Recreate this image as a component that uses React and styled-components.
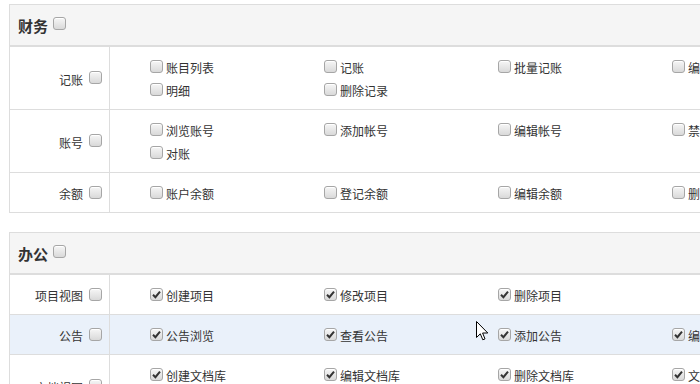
import React from "react";
import styled, { createGlobalStyle } from "styled-components";

const GlobalStyle = createGlobalStyle`
  html, body {
    margin: 0;
    padding: 0;
    background: #fff;
    overflow: hidden;
  }
  body {
    font-family: "Noto Sans CJK SC", "Liberation Sans", sans-serif;
    font-size: 12px;
    color: #333;
  }
`;

const Page = styled.div`
  position: relative;
  padding: 4px 0 0 9px;
  width: 900px;
  height: 384px;
  box-sizing: border-box;
`;

const Panel = styled.div`
  width: 880px;
  border: 1px solid #ddd;
  margin-bottom: 19px;
  background: #fff;
`;

const PanelHeader = styled.div`
  height: 40px;
  display: flex;
  align-items: center;
  gap: 5px;
  padding-left: 8px;
  background: #f5f5f5;
  border-bottom: 2px solid #ddd;
  font-size: 15px;
  font-weight: bold;
  color: #333;
`;

const Row = styled.div`
  display: grid;
  grid-template-columns: 100px 1fr;
  background: ${(p) => (p.$hover ? "#eaf1fa" : "#fff")};
  & + & {
    border-top: 1px solid #ddd;
  }
`;

const LabelCell = styled.div`
  box-sizing: border-box;
  border-right: 1px solid #ddd;
  display: flex;
  align-items: center;
  justify-content: flex-end;
  gap: 6px;
  padding: 2px 7px 0 0;
`;

const ItemsCell = styled.div`
  display: grid;
  grid-template-columns: repeat(4, 174px);
  grid-auto-rows: 23px;
  padding: 9px 0 7px 40px;
`;

const Item = styled.label`
  display: flex;
  align-items: center;
  gap: 3px;
  white-space: nowrap;
`;

const Box = styled.span`
  display: inline-flex;
  align-items: center;
  justify-content: center;
  width: 13px;
  height: 13px;
  box-sizing: border-box;
  flex: none;
  border: 1px solid #a6a6a6;
  border-radius: 3px;
  background: linear-gradient(#f6f6f6, #d9d9d9);
  box-shadow: inset 0 1px 0 #fff;
  margin-top: -3px;
`;

function Check({ checked }) {
  return (
    <Box>
      {checked && (
        <svg width="9" height="9" viewBox="0 0 9 9">
          <path d="M1 4.8 L3.4 7.2 L8 1.6" fill="none" stroke="#333" strokeWidth="2" />
        </svg>
      )}
    </Box>
  );
}

const Cursor = styled.svg`
  position: absolute;
  left: 476px;
  top: 321px;
`;

const sections = [
  {
    title: "财务",
    rows: [
      { label: "记账", items: ["账目列表", "记账", "批量记账", "编辑记账", "明细", "删除记录"] },
      { label: "账号", items: ["浏览账号", "添加帐号", "编辑帐号", "禁用账号", "对账"] },
      { label: "余额", items: ["账户余额", "登记余额", "编辑余额", "删除余额"] },
    ],
  },
  {
    title: "办公",
    rows: [
      { label: "项目视图", checked: true, items: ["创建项目", "修改项目", "删除项目"] },
      { label: "公告", checked: true, hover: true, items: ["公告浏览", "查看公告", "添加公告", "编辑公告"] },
      { label: "文档视图", checked: true, items: ["创建文档库", "编辑文档库", "删除文档库", "文档列表", "浏览文档"] },
    ],
  },
];

export default function App() {
  return (
    <Page>
      <GlobalStyle />
      {sections.map((s) => (
        <Panel key={s.title}>
          <PanelHeader>
            {s.title}
            <Check />
          </PanelHeader>
          {s.rows.map((r) => (
            <Row key={r.label} $hover={r.hover}>
              <LabelCell>
                {r.label}
                <Check />
              </LabelCell>
              <ItemsCell>
                {r.items.map((it) => (
                  <Item key={it}>
                    <Check checked={r.checked} />
                    {it}
                  </Item>
                ))}
              </ItemsCell>
            </Row>
          ))}
        </Panel>
      ))}
      <Cursor width="13" height="21" viewBox="0 0 13 21">
        <path d="M0.5 0.5 L0.5 16.5 L4.3 12.8 L6.8 18.8 L9 17.9 L6.6 12 L11.8 12 Z" fill="#fff" stroke="#000" strokeWidth="1" />
      </Cursor>
    </Page>
  );
}
